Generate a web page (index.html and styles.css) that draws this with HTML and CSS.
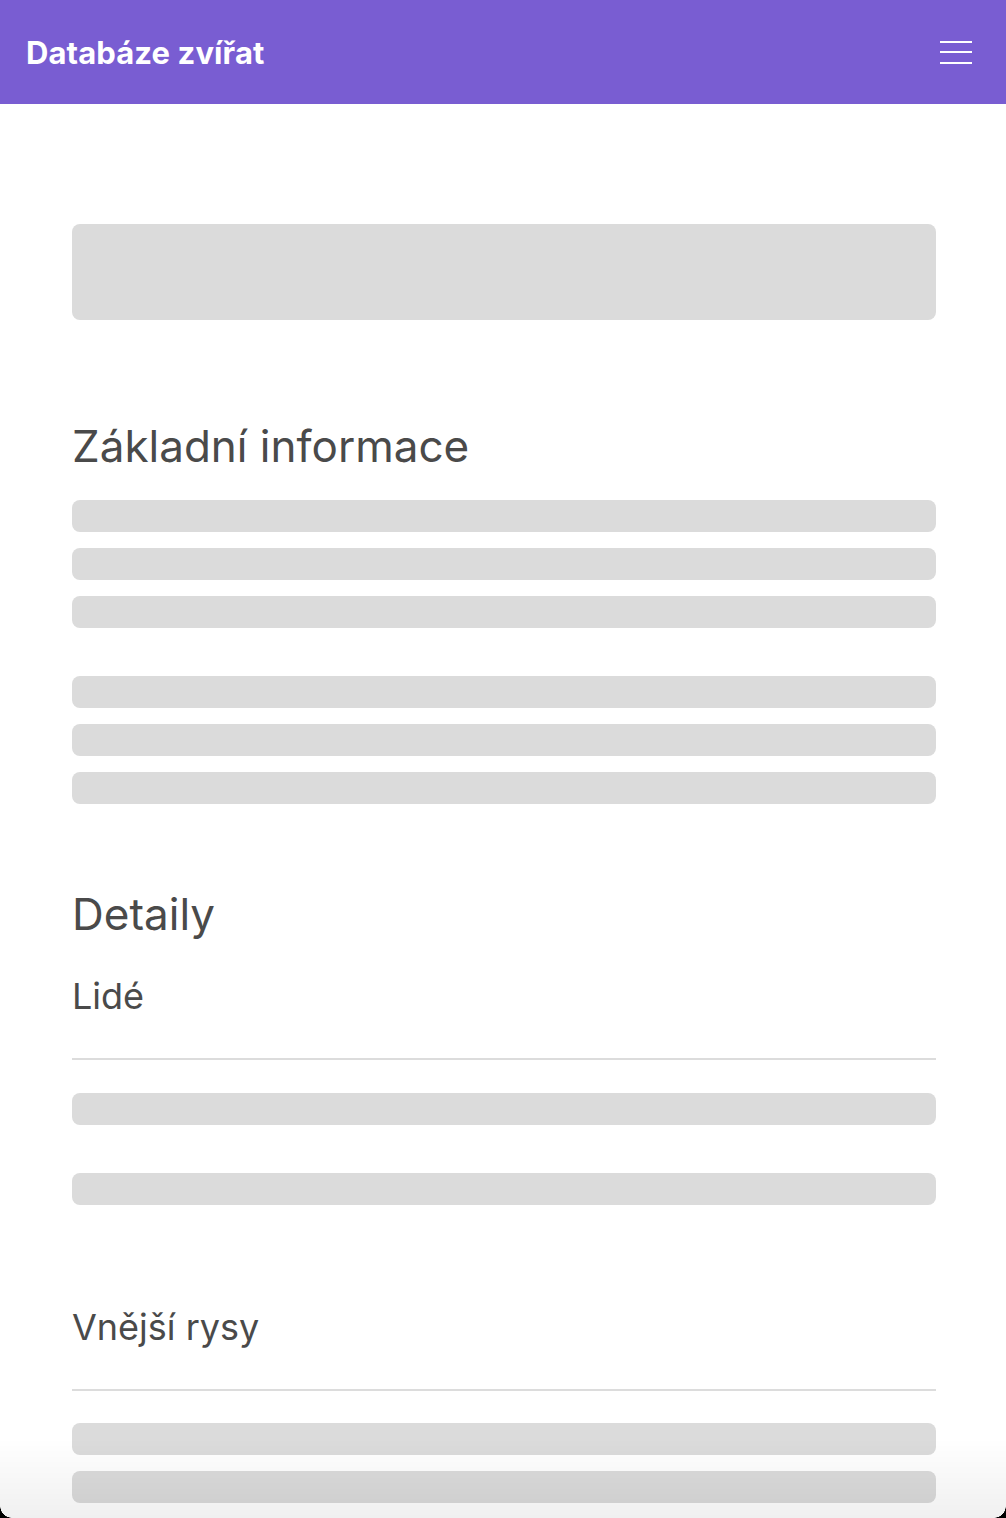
FILE: index.html
```html
<!DOCTYPE html>
<html lang="cs">
<head>
    <meta charset="UTF-8">
    <meta name="viewport" content="width=device-width, initial-scale=1.0">
    <title>Databáze zvířat</title>
    <link rel="stylesheet" href="styles.css">
</head>
<body>
    <header class="top-bar">
        <div class="brand">Databáze zvířat</div>
        <button class="menu-toggle" aria-label="Menu">
            <span></span>
            <span></span>
            <span></span>
        </button>
    </header>

    <main class="page">
        <div class="skeleton skeleton-hero"></div>

        <section class="block">
            <h2 class="block-title">Základní informace</h2>
            <div class="skeleton-group">
                <div class="skeleton skeleton-line"></div>
                <div class="skeleton skeleton-line"></div>
                <div class="skeleton skeleton-line"></div>
            </div>
            <div class="skeleton-group">
                <div class="skeleton skeleton-line"></div>
                <div class="skeleton skeleton-line"></div>
                <div class="skeleton skeleton-line"></div>
            </div>
        </section>

        <section class="block details">
            <h2 class="block-title">Detaily</h2>

            <div class="sub-block">
                <h3 class="sub-title">Lidé</h3>
                <div class="skeleton-list">
                    <div class="skeleton skeleton-line"></div>
                    <div class="skeleton skeleton-line"></div>
                </div>
            </div>

            <div class="sub-block">
                <h3 class="sub-title">Vnější rysy</h3>
                <div class="skeleton-group">
                    <div class="skeleton skeleton-line"></div>
                    <div class="skeleton skeleton-line"></div>
                </div>
            </div>
        </section>
    </main>

    <div class="bottom-fade"></div>
</body>
</html>
```

FILE: styles.css
```css
body {
    margin: 0;
    font-family: Inter, "Noto Sans", sans-serif;
    background-color: #fff;
    color: #4a4a4a;
}

.top-bar {
    height: 104px;
    background-color: #795dd2; /* purple header */
    display: flex;
    align-items: center;
    justify-content: space-between;
    padding: 0 26px;
    box-sizing: border-box;
}

.brand {
    color: #fff;
    font-size: 31px;
    font-weight: 700;
    letter-spacing: 0.1px;
}

.menu-toggle {
    background: none;
    border: none;
    padding: 0;
    width: 32px;
    height: 23px;
    display: flex;
    flex-direction: column;
    justify-content: space-between;
    margin-right: 8px;
    cursor: pointer;
}

.menu-toggle span {
    display: block;
    height: 2px;
    background-color: #fff;
}

.page {
    padding: 120px 70px 0 72px;
}

.skeleton {
    background-color: #dbdbdb;
    border-radius: 8px;
}

.skeleton-hero {
    height: 96px;
}

.skeleton-line {
    height: 32px;
}

.skeleton-group {
    display: flex;
    flex-direction: column;
    gap: 16px;
    margin-bottom: 48px;
}

.skeleton-list {
    display: flex;
    flex-direction: column;
    gap: 48px;
    padding-top: 33px;
}

.block {
    padding-top: 100px;
}

.details {
    padding-top: 36px;
}

.block-title {
    margin: 0 0 28px;
    font-size: 44px;
    font-weight: 400;
    line-height: 52px;
}

.details .block-title {
    margin-bottom: 34px;
}

.sub-title {
    margin: 0;
    font-size: 36px;
    font-weight: 400;
    line-height: 44px;
    padding-bottom: 40px;
    border-bottom: 2px solid #dcdcdc;
}

.sub-block + .sub-block {
    margin-top: 100px;
}

.sub-block .skeleton-group {
    padding-top: 32px;
}

/* soft shade at the bottom of the window */
.bottom-fade {
    position: fixed;
    left: 0;
    right: 0;
    bottom: 0;
    height: 80px;
    background: linear-gradient(rgba(0, 0, 0, 0), rgba(0, 0, 0, 0.06));
    pointer-events: none;
}

.bottom-fade::before,
.bottom-fade::after {
    content: "";
    position: absolute;
    bottom: 0;
    width: 12px;
    height: 12px;
}

.bottom-fade::before {
    left: 0;
    background: radial-gradient(circle at 100% 0, transparent 11.5px, #000 12px);
}

.bottom-fade::after {
    right: 0;
    background: radial-gradient(circle at 0 0, transparent 11.5px, #000 12px);
}
```
